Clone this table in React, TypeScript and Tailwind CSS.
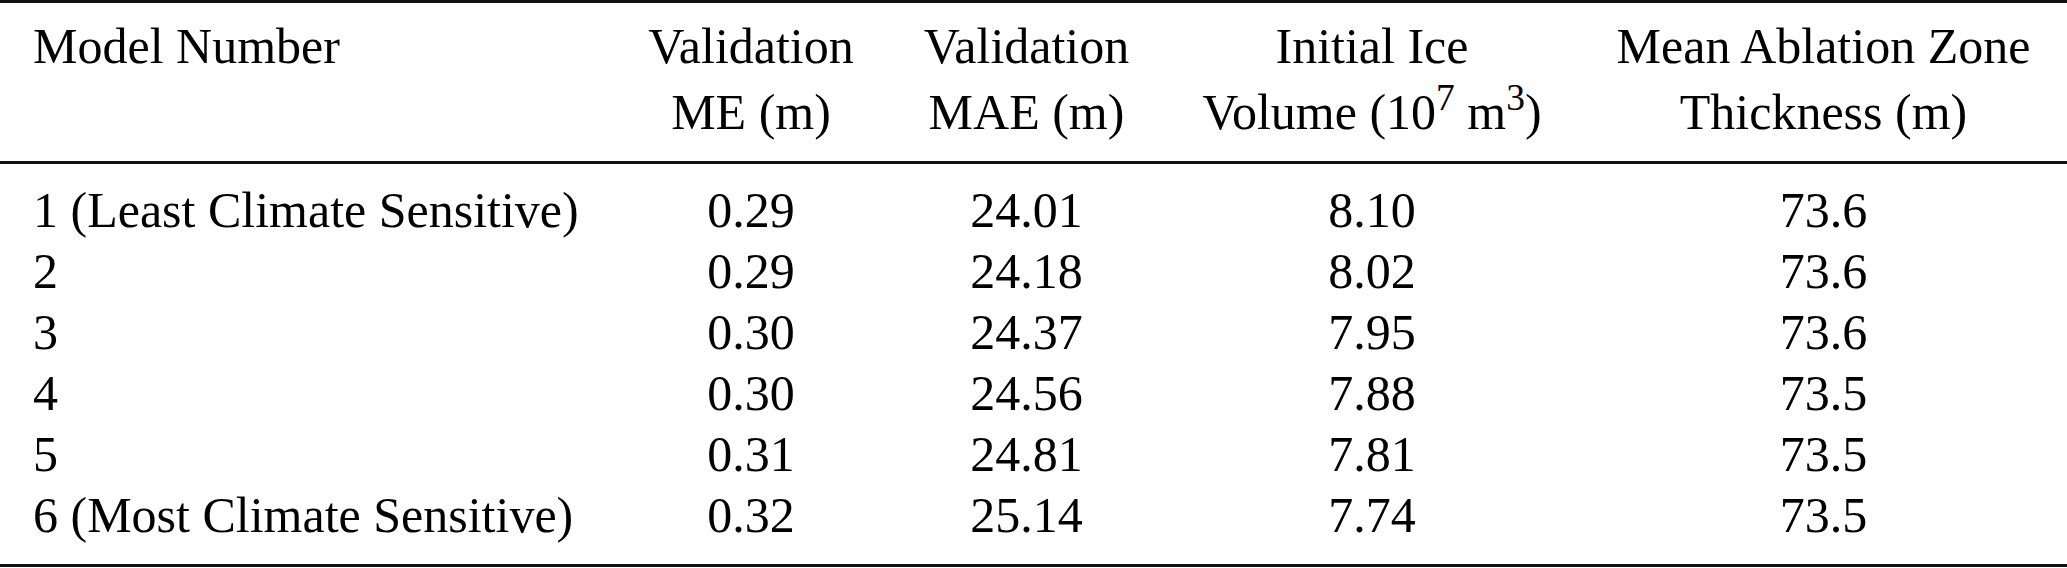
import React from 'react';

type Row = {
  model: string;
  me: string;
  mae: string;
  volume: string;
  thickness: string;
};

const rows: Row[] = [
  { model: '1 (Least Climate Sensitive)', me: '0.29', mae: '24.01', volume: '8.10', thickness: '73.6' },
  { model: '2', me: '0.29', mae: '24.18', volume: '8.02', thickness: '73.6' },
  { model: '3', me: '0.30', mae: '24.37', volume: '7.95', thickness: '73.6' },
  { model: '4', me: '0.30', mae: '24.56', volume: '7.88', thickness: '73.5' },
  { model: '5', me: '0.31', mae: '24.81', volume: '7.81', thickness: '73.5' },
  { model: '6 (Most Climate Sensitive)', me: '0.32', mae: '25.14', volume: '7.74', thickness: '73.5' },
];

const cols = 'grid grid-cols-[613px_276px_275px_416px_487px]';

export default function App() {
  return (
    <div className="w-[2067px] h-[568px] bg-white text-black text-[50px] font-['Liberation_Serif','Times_New_Roman',serif]">
      <div className="h-[3px] bg-[#111]" />

      {/* header */}
      <div className={`${cols} pt-[10px] pb-[16px] leading-[66px]`}>
        <div className="pl-[33px]">Model Number</div>
        <div className="text-center">
          Validation
          <br />
          ME (m)
        </div>
        <div className="text-center">
          Validation
          <br />
          MAE (m)
        </div>
        <div className="text-center">
          Initial Ice
          <br />
          Volume (10<sup>7</sup> m<sup>3</sup>)
        </div>
        <div className="text-center">
          Mean Ablation Zone
          <br />
          Thickness (m)
        </div>
      </div>

      <div className="h-[3px] bg-[#111]" />

      {/* body */}
      <div className="pt-[16px] pb-[18px] leading-[61px]">
        {rows.map((row) => (
          <div key={row.model} className={cols}>
            <div className="pl-[33px] whitespace-nowrap">{row.model}</div>
            <div className="text-center">{row.me}</div>
            <div className="text-center">{row.mae}</div>
            <div className="text-center">{row.volume}</div>
            <div className="text-center">{row.thickness}</div>
          </div>
        ))}
      </div>

      <div className="h-[3px] bg-[#111]" />
    </div>
  );
}
